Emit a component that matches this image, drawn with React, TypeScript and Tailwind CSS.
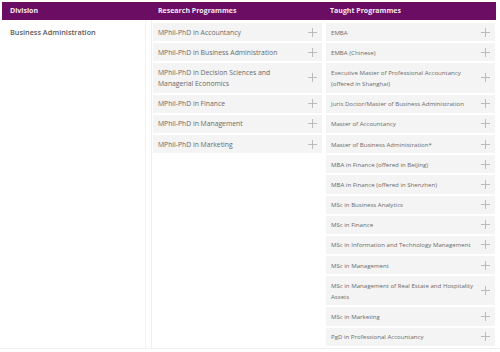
const RESEARCH = [
  "MPhil-PhD in Accountancy",
  "MPhil-PhD in Business Administration",
  "MPhil-PhD in Decision Sciences and Managerial Economics",
  "MPhil-PhD in Finance",
  "MPhil-PhD in Management",
  "MPhil-PhD in Marketing",
];

const TAUGHT = [
  "EMBA",
  "EMBA (Chinese)",
  "Executive Master of Professional Accountancy (offered in Shanghai)",
  "Juris Doctor/Master of Business Administration",
  "Master of Accountancy",
  "Master of Business Administration*",
  "MBA in Finance (offered in Beijing)",
  "MBA in Finance (offered in Shenzhen)",
  "MSc in Business Analytics",
  "MSc in Finance",
  "MSc in Information and Technology Management",
  "MSc in Management",
  "MSc in Management of Real Estate and Hospitality Assets",
  "MSc in Marketing",
  "PgD in Professional Accountancy",
];

function Plus() {
  return (
    <svg width="9" height="9" viewBox="0 0 9 9" className="shrink-0">
      <path d="M4.5 0v9M0 4.5h9" stroke="#b5b5b5" strokeWidth="0.9" />
    </svg>
  );
}

function Item({ label, wide }: { label: string; wide?: boolean }) {
  return (
    <div className="flex items-center justify-between gap-[3px] bg-[#f4f4f4] pl-[5px] pr-[5px] py-[3.6px]">
      <span className={wide ? "leading-[11px] text-[6.8px] text-[#6a6a6a]" : "leading-[11px] text-[6.1px] text-[#6a6a6a]"}>
        {label}
      </span>
      <Plus />
    </div>
  );
}

export default function App() {
  return (
    <div
      className="w-[500px] h-[352px] overflow-hidden bg-white pt-[2px] pl-[2px] pr-[4px]"
      style={{ fontFamily: "'Open Sans', 'Liberation Sans', sans-serif" }}
    >
      <div className="grid grid-cols-[149px_172px_173px] h-[18px] items-center bg-[#6b0d62] text-[7px] leading-[18px] font-bold text-[#f6e9f3]">
        <span className="pl-2">Division</span>
        <span className="pl-[7px]">Research Programmes</span>
        <span className="pl-[7px]">Taught Programmes</span>
      </div>
      <div className="grid grid-cols-[149px_172px_173px] border-b border-[#efefef] -ml-[2px] pl-[2px] w-[500px]">
        <div className="w-[144px] border-r border-[#f3f3f3] pl-2 pt-[7px] text-[7.3px] leading-[10px] font-semibold text-[#5a5a5a]">
          Business Administration
        </div>
        <div className="flex flex-col gap-[2px] border-l border-[#f0f0f0] pl-[1px] pr-[1px] pt-[3px] pb-[2px]">
          {RESEARCH.map((r) => (
            <Item key={r} label={r} wide />
          ))}
        </div>
        <div className="flex flex-col gap-[2px] pl-[3px] pr-[1px] pt-[3px] pb-[2px]">
          {TAUGHT.map((t) => (
            <Item key={t} label={t} />
          ))}
        </div>
      </div>
    </div>
  );
}
